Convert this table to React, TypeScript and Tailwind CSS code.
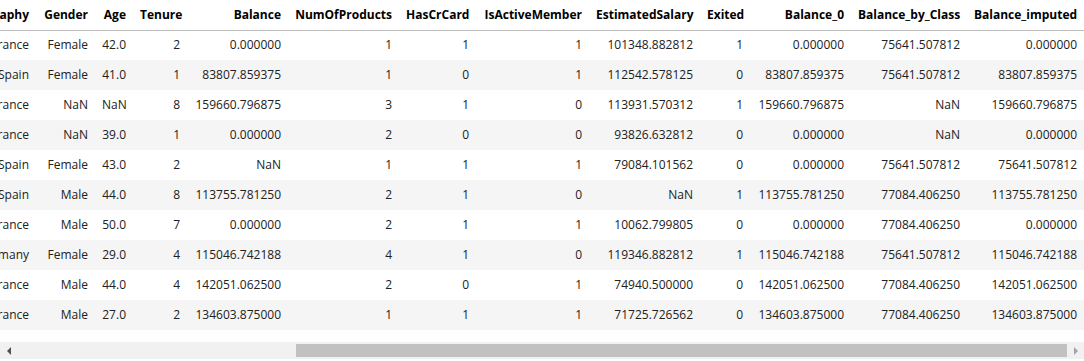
import React from "react";

const COLS: { name: string; w: number }[] = [
  { name: "Geography", w: 90 },
  { name: "Gender", w: 59 },
  { name: "Age", w: 38 },
  { name: "Tenure", w: 54 },
  { name: "Balance", w: 101 },
  { name: "NumOfProducts", w: 111 },
  { name: "HasCrCard", w: 77 },
  { name: "IsActiveMember", w: 113 },
  { name: "EstimatedSalary", w: 111 },
  { name: "Exited", w: 50 },
  { name: "Balance_0", w: 101 },
  { name: "Balance_by_Class", w: 116 },
  { name: "Balance_imputed", w: 117 },
];

const ROWS: string[][] = [
  ["France", "Female", "42.0", "2", "0.000000", "1", "1", "1", "101348.882812", "1", "0.000000", "75641.507812", "0.000000"],
  ["Spain", "Female", "41.0", "1", "83807.859375", "1", "0", "1", "112542.578125", "0", "83807.859375", "75641.507812", "83807.859375"],
  ["France", "NaN", "NaN", "8", "159660.796875", "3", "1", "0", "113931.570312", "1", "159660.796875", "NaN", "159660.796875"],
  ["France", "NaN", "39.0", "1", "0.000000", "2", "0", "0", "93826.632812", "0", "0.000000", "NaN", "0.000000"],
  ["Spain", "Female", "43.0", "2", "NaN", "1", "1", "1", "79084.101562", "0", "0.000000", "75641.507812", "75641.507812"],
  ["Spain", "Male", "44.0", "8", "113755.781250", "2", "1", "0", "NaN", "1", "113755.781250", "77084.406250", "113755.781250"],
  ["France", "Male", "50.0", "7", "0.000000", "2", "1", "1", "10062.799805", "0", "0.000000", "77084.406250", "0.000000"],
  ["Germany", "Female", "29.0", "4", "115046.742188", "4", "1", "0", "119346.882812", "1", "115046.742188", "75641.507812", "115046.742188"],
  ["France", "Male", "44.0", "4", "142051.062500", "2", "0", "1", "74940.500000", "0", "142051.062500", "77084.406250", "142051.062500"],
  ["France", "Male", "27.0", "2", "134603.875000", "1", "1", "1", "71725.726562", "0", "134603.875000", "77084.406250", "134603.875000"],
];

export default function App() {
  return (
    <div className="w-[1084px] h-[361px] bg-white overflow-hidden" style={{ fontFamily: '"Open Sans", "Noto Sans", sans-serif' }}>
      {/* table scrolled to the right, left part hidden */}
      <div className="w-[1084px] overflow-hidden">
        <table className="table-fixed border-collapse ml-[-54px] text-[12px]" style={{ width: 1138 }}>
          <colgroup>
            {COLS.map((c) => (
              <col key={c.name} style={{ width: c.w }} />
            ))}
          </colgroup>
          <thead>
            <tr className="h-[30px] border-b border-[#bdbdbd]">
              {COLS.map((c) => (
                <th key={c.name} className="text-right font-bold text-black px-[7px] whitespace-nowrap align-middle">
                  {c.name}
                </th>
              ))}
            </tr>
          </thead>
          <tbody>
            {ROWS.map((r, i) => (
              <tr key={i} className={`h-[30px] ${i % 2 === 1 ? "bg-[#f5f5f5]" : "bg-white"}`}>
                {r.map((v, j) => (
                  <td key={j} className="text-right text-[#212121] px-[7px] whitespace-nowrap align-middle">
                    {v}
                  </td>
                ))}
              </tr>
            ))}
          </tbody>
        </table>
      </div>

      {/* horizontal scrollbar */}
      <div className="mt-[12px] h-[17px] bg-[#f1f1f1] flex items-center">
        <div className="w-[17px] h-full flex items-center justify-center">
          <div className="w-0 h-0 border-y-[4px] border-y-transparent border-r-[4px] border-r-[#505050]" />
        </div>
        <div className="w-[279px]" />
        <div className="w-[771px] h-[13px] bg-[#c1c1c1]" />
        <div className="w-[17px] h-full flex items-center justify-center">
          <div className="w-0 h-0 border-y-[4px] border-y-transparent border-l-[4px] border-l-[#a3a3a3]" />
        </div>
      </div>
    </div>
  );
}
